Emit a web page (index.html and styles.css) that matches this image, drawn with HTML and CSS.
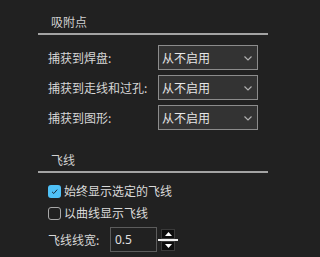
FILE: index.html
```html
<!DOCTYPE html>
<html>
<head>
<meta charset="utf-8">
<link rel="stylesheet" href="styles.css">
</head>
<body>
<div class="panel">
  <div class="section-title">吸附点</div>
  <div class="rows">
    <div class="row">
      <span class="label">捕获到焊盘:</span>
      <div class="select"><span>从不启用</span><svg class="chev" width="8" height="5" viewBox="0 0 8 5"><path d="M0.5 0.5 L4 4 L7.5 0.5" fill="none" stroke="#b0b0b0" stroke-width="1.2"/></svg></div>
    </div>
    <div class="row">
      <span class="label">捕获到走线和过孔:</span>
      <div class="select"><span>从不启用</span><svg class="chev" width="8" height="5" viewBox="0 0 8 5"><path d="M0.5 0.5 L4 4 L7.5 0.5" fill="none" stroke="#b0b0b0" stroke-width="1.2"/></svg></div>
    </div>
    <div class="row">
      <span class="label">捕获到图形:</span>
      <div class="select"><span>从不启用</span><svg class="chev" width="8" height="5" viewBox="0 0 8 5"><path d="M0.5 0.5 L4 4 L7.5 0.5" fill="none" stroke="#b0b0b0" stroke-width="1.2"/></svg></div>
    </div>
  </div>
  <div class="section-title second">飞线</div>
  <div class="checks">
    <div class="check-row">
      <span class="box checked"><svg width="13" height="13" viewBox="0 0 13 13"><path d="M4 6.8 L5.8 8.5 L9.2 4.6" fill="none" stroke="#1a2a3a" stroke-width="1"/></svg></span>
      <span class="check-text">始终显示选定的飞线</span>
    </div>
    <div class="check-row">
      <span class="box"></span>
      <span class="check-text">以曲线显示飞线</span>
    </div>
    <div class="spin-row">
      <span class="label short">飞线线宽:</span>
      <div class="input">0.5</div>
      <div class="spinner">
        <div class="spin-btn"><svg width="7" height="4" viewBox="0 0 7 4"><path d="M0 4 L3.5 0 L7 4 Z" fill="#ffffff"/></svg></div>
        <div class="spin-line"></div>
        <div class="spin-btn"><svg width="7" height="4" viewBox="0 0 7 4"><path d="M0 0 L3.5 4 L7 0 Z" fill="#ffffff"/></svg></div>
      </div>
    </div>
  </div>
</div>
</body>
</html>
```
FILE: styles.css
```css
html, body {
  margin: 0;
  padding: 0;
  background: #212121;
}
body {
  width: 273px;
  height: 257px;
  overflow: hidden;
  font-family: "Noto Sans CJK SC", "Noto Sans", sans-serif;
  font-size: 12px;
  color: #d6d6d6;
}
.panel {
  padding-top: 14px;
}
.section-title {
  margin-left: 38px;
  width: 230px;
  box-sizing: border-box;
  padding-left: 13px;
  line-height: 16px;
  height: 21px;
  padding-bottom: 3px;
  border-bottom: 2px solid #a3a3a3;
  color: #d0d0d0;
}
.section-title.second {
  margin-top: 22px;
}
.rows {
  margin-top: 10px;
  display: flex;
  flex-direction: column;
  gap: 5px;
}
.row {
  display: flex;
  align-items: center;
  height: 25px;
  padding-left: 48px;
}
.label {
  width: 110px;
  line-height: 16px;
  white-space: nowrap;
}
.select {
  width: 100px;
  height: 25px;
  box-sizing: border-box;
  border: 1px solid #8c8c8c;
  background: #333333;
  display: flex;
  align-items: center;
  justify-content: space-between;
  padding: 0 5px 0 3px;
  line-height: 16px;
  color: #e6e6e6;
}
.chev {
  display: block;
  margin-top: 1px;
}
.checks {
  margin-top: 7px;
  padding-left: 48px;
}
.check-row {
  height: 22px;
  display: flex;
  align-items: center;
  gap: 3px;
}
.box {
  width: 13px;
  height: 13px;
  box-sizing: border-box;
  border: 1px solid #a8a8a8;
  border-radius: 3px;
  flex: none;
}
.box.checked {
  border: none;
  background: #4fc1f7;
}
.box svg {
  display: block;
}
.check-text {
  line-height: 16px;
  color: #dadada;
}
.spin-row {
  margin-top: 3px;
  display: flex;
  align-items: center;
  height: 25px;
}
.label.short {
  width: 62px;
}
.input {
  width: 47px;
  height: 25px;
  box-sizing: border-box;
  border: 1px solid #5c5c5c;
  padding-left: 4px;
  line-height: 23px;
  font-family: "Noto Sans", sans-serif;
  font-size: 12px;
  color: #e0e0e0;
}
.spinner {
  margin-left: 1px;
  width: 20px;
  display: flex;
  flex-direction: column;
  align-items: center;
}
.spin-btn {
  width: 14px;
  height: 10px;
  box-sizing: border-box;
  background: #0e0e0e;
  border: 1px solid #3a3a3a;
  display: flex;
  align-items: center;
  justify-content: center;
}
.spin-line {
  width: 20px;
  height: 2px;
  background: #f2f2f2;
  margin: 0;
}
.spin-btn svg {
  display: block;
}
```
